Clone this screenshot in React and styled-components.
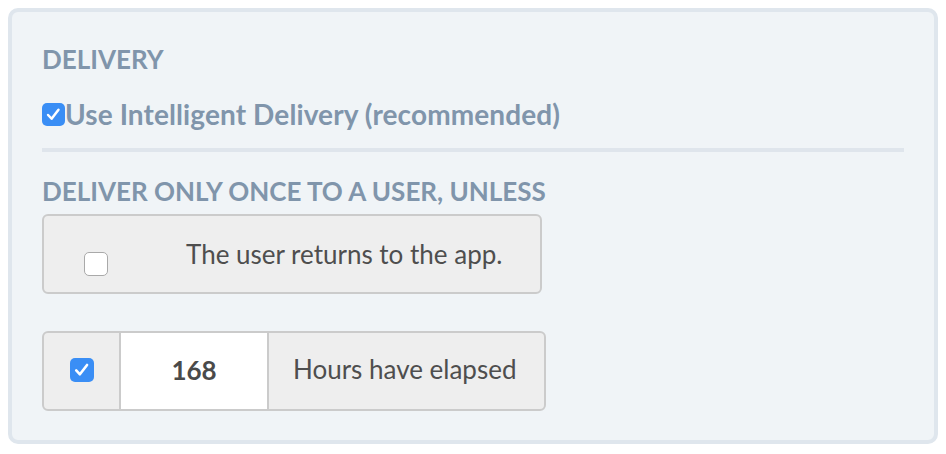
import React from 'react'
import styled, {createGlobalStyle} from 'styled-components'

const GlobalStyle = createGlobalStyle`
    body {
        margin: 8px;
        background: #ffffff;
        font-family: Lato, "Open Sans", sans-serif;
    }
`;

const colors = {
    label: '#8095ab',
    text: '#4e4e4e',
    blue: '#3a8ef5',
    panelBorder: '#dfe6ed',
    panelBg: '#f0f4f7',
    groupBorder: '#cbcbcb',
    groupBg: '#eeeeee',
};

const Panel = styled.div`
    box-sizing: border-box;
    width: 930px;
    height: 436px;
    border: 4px solid ${colors.panelBorder};
    border-radius: 10px;
    background: ${colors.panelBg};
    padding: 0 30px;
    display: flex;
    flex-direction: column;
`;

const SectionTitle = styled.div`
    font-size: 26px;
    font-weight: 700;
    line-height: 30px;
    color: ${colors.label};
    margin-top: ${p => p.$top}px;
`;

const CheckRow = styled.label`
    display: flex;
    align-items: center;
    margin-top: 25px;
    font-size: 28px;
    font-weight: 700;
    letter-spacing: 0.1px;
    line-height: 30px;
    color: ${colors.label};
`;

const Divider = styled.div`
    height: 4px;
    background: #dfe5ec;
    margin-top: 19px;
`;

const Box = styled.span`
    box-sizing: border-box;
    width: ${p => p.$size}px;
    height: ${p => p.$size}px;
    flex-shrink: 0;
    border-radius: 5px;
    display: inline-flex;
    align-items: center;
    justify-content: center;
    background: ${p => p.$checked ? colors.blue : '#ffffff'};
    border: ${p => p.$checked ? 'none' : '1px solid #a9a9a9'};
    margin-top: ${p => p.$offset || 0}px;
`;

const Check = ({checked, size = 23, offset}) => (
    <Box $checked={checked} $size={size} $offset={offset}>
        {checked && (
            <svg width={size * 0.72} height={size * 0.72} viewBox="0 0 14 14">
                <path d="M2.6 7.6 L5.6 10.8 L11.4 3.2" fill="none" stroke="#ffffff" strokeWidth="2.1"
                      strokeLinecap="round" strokeLinejoin="round"/>
            </svg>
        )}
    </Box>
);

const InputGroup = styled.div`
    box-sizing: border-box;
    display: flex;
    width: ${p => p.$width}px;
    height: 80px;
    margin-top: ${p => p.$top}px;
    border: 2px solid ${colors.groupBorder};
    border-radius: 6px;
    background: ${colors.groupBg};
    overflow: hidden;
    font-size: 26px;
    white-space: nowrap;
    color: ${colors.text};
`;

const Addon = styled.div`
    box-sizing: border-box;
    display: flex;
    align-items: center;
    justify-content: ${p => p.$center ? 'center' : 'flex-start'};
    width: ${p => p.$width ? `${p.$width}px` : 'auto'};
    flex: ${p => p.$width ? 'none' : 1};
    padding: 0 ${p => p.$pad || 0}px ${p => p.$lift || 0}px;
    border-left: ${p => p.$divided ? `2px solid ${colors.groupBorder}` : 'none'};
`;

const NumberCell = styled.div`
    width: 146px;
    display: flex;
    align-items: center;
    justify-content: center;
    padding-bottom: 3px;
    background: #ffffff;
    border-left: 2px solid ${colors.groupBorder};
    font-size: 26px;
    font-weight: 700;
    color: #4a4a4a;
`;

const App = () => {
    return (
        <>
            <GlobalStyle/>
            <Panel>
                <SectionTitle $top={32}>DELIVERY</SectionTitle>
                <CheckRow>
                    <Check checked size={23}/>
                    Use Intelligent Delivery (recommended)
                </CheckRow>
                <Divider/>
                <SectionTitle $top={24}>DELIVER ONLY ONCE TO A USER, UNLESS</SectionTitle>
                <InputGroup $width={500} $top={8}>
                    <Addon $width={142} $pad={40}>
                        <Check size={24} offset={20}/>
                    </Addon>
                    <Addon $lift={0}>The user returns to the app.</Addon>
                </InputGroup>
                <InputGroup $width={504} $top={37}>
                    <Addon $width={75} $center $lift={2}>
                        <Check checked size={24}/>
                    </Addon>
                    <NumberCell>168</NumberCell>
                    <Addon $divided $pad={24} $lift={4}>Hours have elapsed</Addon>
                </InputGroup>
            </Panel>
        </>
    )
}

export default App
